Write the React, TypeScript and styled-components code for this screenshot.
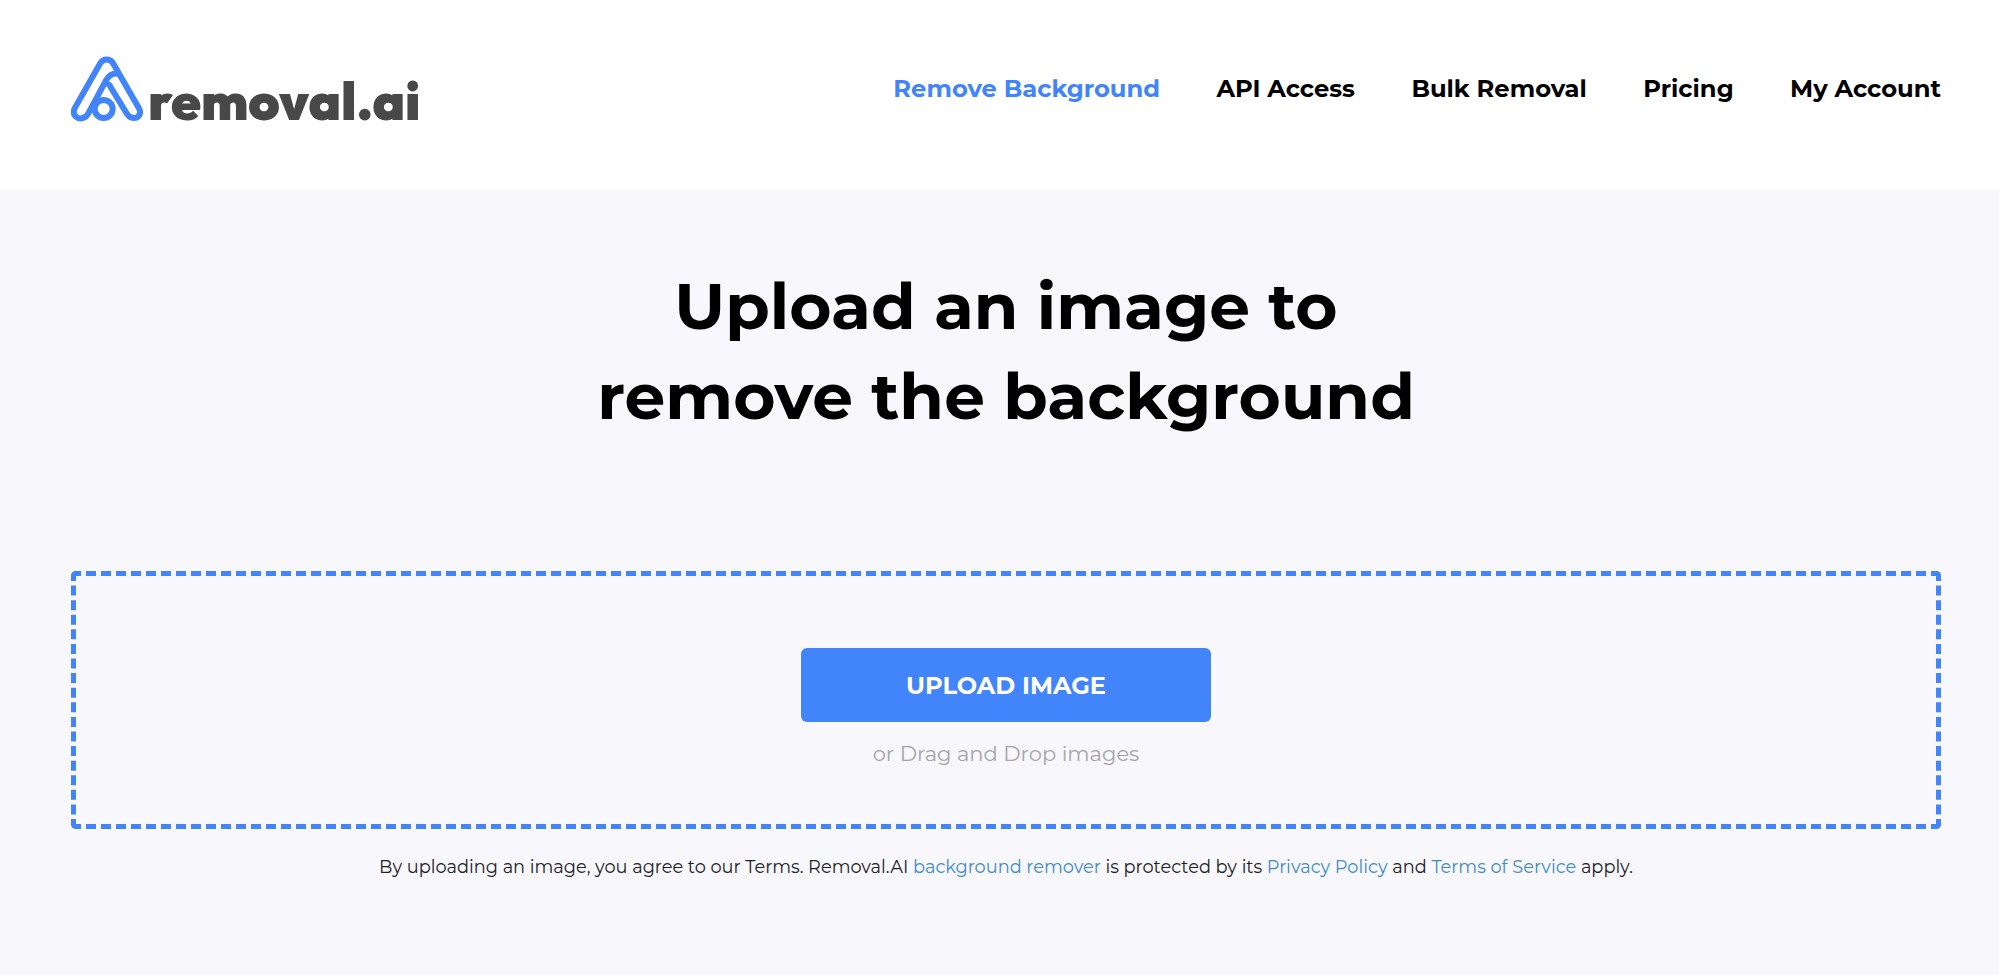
import React from "react";
import styled, { createGlobalStyle } from "styled-components";

const GlobalStyle = createGlobalStyle`
  *, *::before, *::after { box-sizing: border-box; }
  body {
    margin: 0;
    background: #f7f7fc;
    color: #000;
    font-family: Montserrat, Inter, "Liberation Sans", sans-serif;
  }
  a { text-decoration: none; }
`;

const Page = styled.div`
  min-height: 975px;
  display: flex;
  flex-direction: column;
`;

const Header = styled.header`
  height: 190px;
  padding: 0 58px 0 71px;
  background: #fff;
  display: flex;
  align-items: flex-start;
  justify-content: space-between;
`;

const Logo = styled.a`
  display: flex;
  align-items: flex-start;
  padding-top: 56px;
  color: #484848;
`;

const LogoMark = styled.svg`
  width: 72px;
  height: 66px;
  flex: none;
`;

const LogoName = styled.span`
  margin: 12px 0 0 5px;
  font-family: Outfit, Inter, "Liberation Sans", sans-serif;
  font-size: 53.5px;
  line-height: 64px;
  font-weight: 900;
  letter-spacing: -0.1px;
  font-feature-settings: "cv11";
`;

const Nav = styled.nav`
  display: flex;
  gap: 56.4px;
  padding-top: 74px;
`;

const NavLink = styled.a<{ $active?: boolean }>`
  color: ${(p) => (p.$active ? "#4285fa" : "#000")};
  font-size: 24.23px;
  line-height: 29px;
  font-weight: 700;
  white-space: nowrap;
`;

const Main = styled.main`
  flex: 1;
  display: flex;
  flex-direction: column;
  padding: 71px 58px 0 71px;
`;

const Title = styled.h1`
  margin: 0;
  font-size: 64.6px;
  line-height: 90px;
  font-weight: 700;
  text-align: center;
`;

const DropZone = styled.section`
  height: 258px;
  margin-top: 130px;
  padding-top: 72px;
  border: 5px dashed #4285fa;
  border-radius: 5px;
  display: flex;
  flex-direction: column;
  align-items: center;
`;

const UploadButton = styled.button`
  width: 410px;
  height: 74px;
  padding: 0;
  border: 0;
  border-radius: 6px;
  background: #4285fa;
  color: #fff;
  font-family: inherit;
  font-size: 24.1px;
  font-weight: 700;
  cursor: pointer;
`;

const Hint = styled.p`
  margin: 18px 0 0;
  color: #a5a5a9;
  font-size: 21px;
  line-height: 28px;
`;

const Terms = styled.p`
  margin: 25px 0 0;
  color: #222226;
  font-size: 17.75px;
  line-height: 25px;
  text-align: center;
`;

const TermsLink = styled.a`
  color: #428bca;
`;

const links = [
  { label: "Remove Background", active: true },
  { label: "API Access" },
  { label: "Bulk Removal" },
  { label: "Pricing" },
  { label: "My Account" },
];

export default function App() {
  return (
    <Page>
      <GlobalStyle />
      <Header>
        <Logo href="#">
          <LogoMark viewBox="33 33 216 198" fill="none" stroke="#4285fa" strokeWidth="18" strokeLinecap="round" strokeLinejoin="round">
            <path d="M174 86C158 84 147 91 138 106L85 205C75 224 56 223 47 214C40 207 40 197 45 188L120 56C129 39 151 39 160 56L236 188C246 205 236 219 221 219C211 219 205 214 200 205L148 120" />
            <circle cx="131" cy="192" r="27" />
          </LogoMark>
          <LogoName>removal.ai</LogoName>
        </Logo>
        <Nav>
          {links.map((l) => (
            <NavLink key={l.label} href="#" $active={l.active}>
              {l.label}
            </NavLink>
          ))}
        </Nav>
      </Header>
      <Main>
        <Title>
          Upload an image to
          <br />
          remove the background
        </Title>
        <DropZone>
          <UploadButton type="button">UPLOAD IMAGE</UploadButton>
          <Hint>or Drag and Drop images</Hint>
        </DropZone>
        <Terms>
          By uploading an image, you agree to our Terms. Removal.AI{" "}
          <TermsLink href="#">background remover</TermsLink> is protected by its{" "}
          <TermsLink href="#">Privacy Policy</TermsLink> and{" "}
          <TermsLink href="#">Terms of Service</TermsLink> apply.
        </Terms>
      </Main>
    </Page>
  );
}
